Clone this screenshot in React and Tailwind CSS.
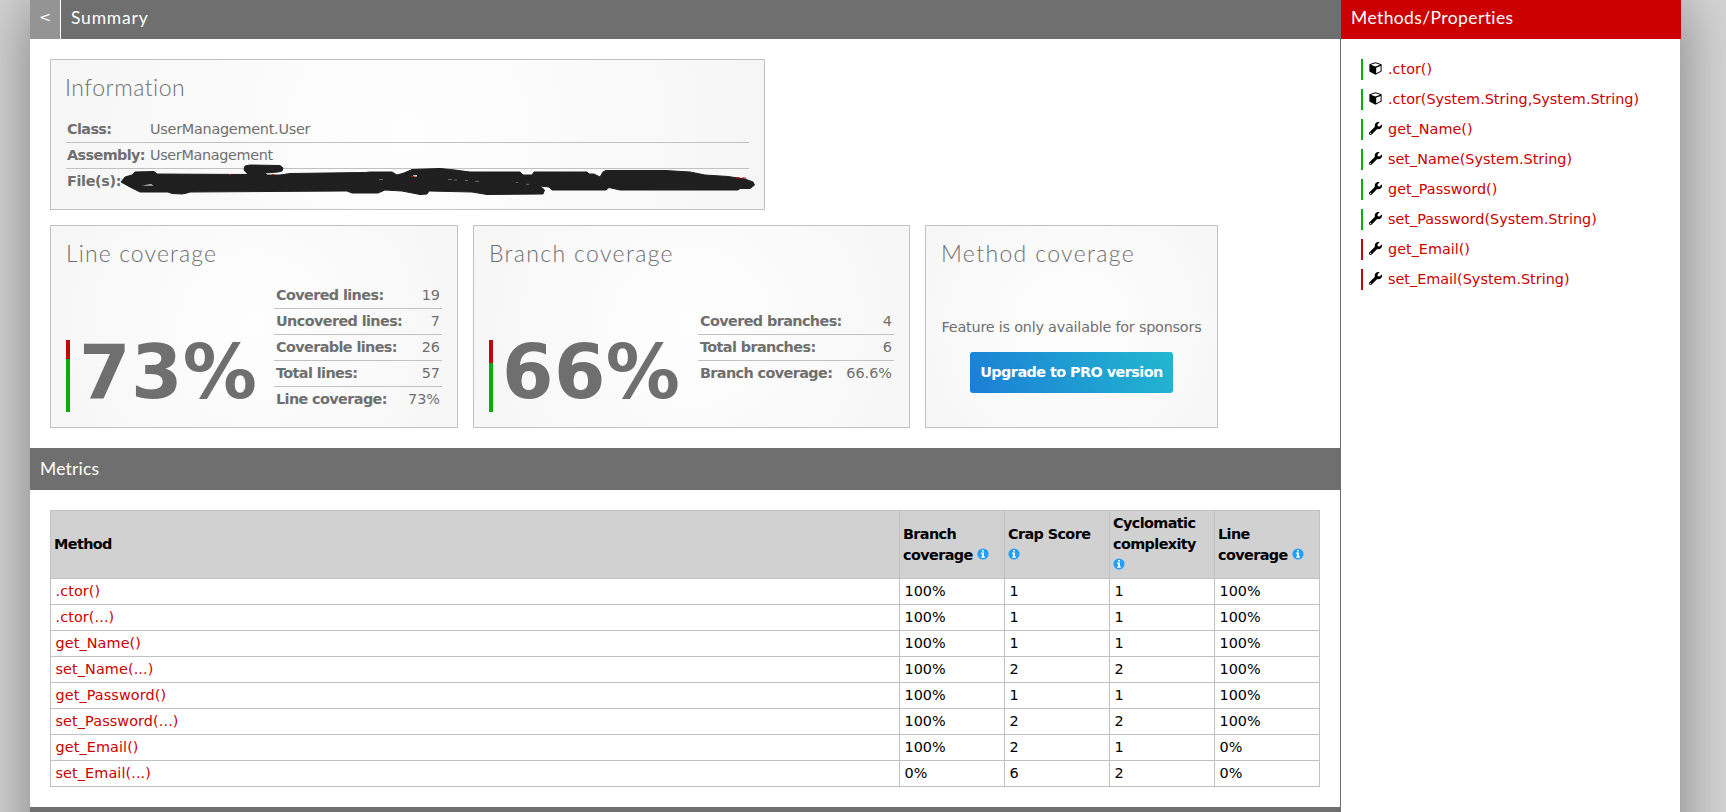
import React from 'react';
import { FaWrench } from 'react-icons/fa';

const methods = [
  { name: '.ctor()', short: '.ctor()', type: 'ctor', covered: true, values: ['100%', '1', '1', '100%'] },
  { name: '.ctor(System.String,System.String)', short: '.ctor(...)', type: 'ctor', covered: true, values: ['100%', '1', '1', '100%'] },
  { name: 'get_Name()', short: 'get_Name()', type: 'prop', covered: true, values: ['100%', '1', '1', '100%'] },
  { name: 'set_Name(System.String)', short: 'set_Name(...)', type: 'prop', covered: true, values: ['100%', '2', '2', '100%'] },
  { name: 'get_Password()', short: 'get_Password()', type: 'prop', covered: true, values: ['100%', '1', '1', '100%'] },
  { name: 'set_Password(System.String)', short: 'set_Password(...)', type: 'prop', covered: true, values: ['100%', '2', '2', '100%'] },
  { name: 'get_Email()', short: 'get_Email()', type: 'prop', covered: false, values: ['100%', '2', '1', '0%'] },
  { name: 'set_Email(System.String)', short: 'set_Email(...)', type: 'prop', covered: false, values: ['0%', '6', '2', '0%'] }
];

const lineStats = [
  ['Covered lines:', '19'],
  ['Uncovered lines:', '7'],
  ['Coverable lines:', '26'],
  ['Total lines:', '57'],
  ['Line coverage:', '73%']
];

const branchStats = [
  ['Covered branches:', '4'],
  ['Total branches:', '6'],
  ['Branch coverage:', '66.6%']
];

function CubeIcon() {
  return (
    <svg viewBox="0 0 13 13" className="h-[13px] w-[13px]">
      <path d="M6.5 0.3L12.6 2.2V9.6L6.5 12.7L0.4 9.6V2.2Z" fill="#000" />
      <path d="M6.5 1.3L11.2 2.8L6.5 4.6L1.8 2.8Z" fill="#fff" />
      <path d="M7.2 5.8L11.6 4.1V9L7.2 11.2Z" fill="#fff" />
    </svg>
  );
}

function InfoIcon() {
  return (
    <svg viewBox="0 0 12 12" className="relative -top-[2px] inline h-3 w-3 align-middle">
      <circle cx="6" cy="6" r="5.6" fill="#23a0fc" />
      <path d="M5 2h2v1.6H5zM4.2 4.6H7v3.8h.9v1.3H4.1V8.4H5V5.9h-.8z" fill="#fff" />
    </svg>
  );
}

// Blacked out file path
function Redaction() {
  return (
    <svg viewBox="120 160 640 40" className="absolute -top-[9px] left-[54px] h-10 w-[640px]">
      <path
        d="M121 182L125 177L132 175L135 172L154 171.500L157 174L248 174.500L244 170L245 166L250 165L280 165.500L283 168L282 171L278 172L265 173L267 175L280 175L290 173.500L365 172.500L370 172L392 172L397 175L404 173L412 169.500L440 168.500L455 170L470 172L520 172L523 175L532 175L534 172L587 172L589 174L594 174L598 176L600 177L603 172L606 170.500L665 170.500L690 172L705 175L728 176.500L745 179L753 182L754.500 185L750 188.500L740 188.500L738 190L620 190L609 187.500L606 190L552 190L549 187L540 186L544.500 190L543 194L487 194.500L472 192L429 191L427 194L420 194.500L402 191L385 190L378 193L352 193L347 191L190 192L187 193L182 194L172 193.500L168 192L140 192L130 187Z"
        fill="#1f1f1f"
        stroke="#1f1f1f"
        strokeLinejoin="round"
      />
      <path d="M141.500 185.500L151 184.200L153.500 185.500Z" fill="#fff" />
      <path d="M413 175.500L417 175V176.500H413Z" fill="#fff" />
      <path d="M736 178h4M742 178h4M411 176.500h3M229 174.500h2M272 174.500h2" stroke="#c00" />
      <path d="M379 179.500h4M448 179.500h4M454 180h3M465 180.500h3M475 181.300h4M516 182.500h2M526 184.300h3" stroke="#8a7a78" strokeWidth="0.8" />
    </svg>
  );
}

function Card({ title, titleClass, className, children }) {
  return (
    <div className={`flex flex-col border border-[#c1c1c1] bg-[radial-gradient(circle,#fefefe_0%,#f6f6f6_100%)] p-[15px] text-[#6f6f6f] ${className}`}>
      <h2 className={`h-[27px] whitespace-nowrap font-['Lato'] text-[23px] font-light leading-[25px] ${titleClass}`}>{title}</h2>
      {children}
    </div>
  );
}

function Percentage({ value, uncovered }) {
  return (
    <div className="flex h-[72px]">
      <div className="flex h-full w-1 flex-col bg-[#0aad0a]">
        <div className="bg-[#c10909]" style={{ height: uncovered }} />
      </div>
      <span className="ml-[9px] text-[74px] font-bold leading-[64px] tracking-[0.4px]">{value}</span>
    </div>
  );
}

function Stats({ rows, className }) {
  return (
    <div className={`shrink-0 divide-y divide-[#c1c1c1] ${className}`}>
      {rows.map(([label, value]) => (
        <div key={label} className="flex h-[26px] items-center justify-between px-[2px] last:h-[25px]">
          <span className="font-bold tracking-[-0.6px]">{label}</span>
          <span>{value}</span>
        </div>
      ))}
    </div>
  );
}

function HeaderCell({ children }) {
  return (
    <th className="w-[105px] border border-[#c1c1c1] pl-[3px] pr-[8px] text-left leading-[21px]">
      {children} <InfoIcon />
    </th>
  );
}

export default function App() {
  return (
    <div className="h-[812px] overflow-hidden bg-[#d6d6d6] font-['DejaVu_Sans',sans-serif] text-[14.4px]">
      <div className="ml-[30px] flex h-[1200px] w-[1650px] bg-white shadow-[0_0_60px_#7d7d7d]">
        {/* Left column */}
        <main className="w-[1311px] border-r border-[#6f6f6f]">
          <div className="-mr-px flex h-[39px] items-center bg-[#6f6f6f] text-white">
            <a className="flex h-full w-[31px] items-center justify-center border-r border-white bg-[#949494] pb-1">&lt;</a>
            <h1 className="pb-[3px] pl-[10px] font-['Lato'] text-[17.5px] tracking-[0.8px]">Summary</h1>
          </div>

          <div className="flex flex-col gap-[15px] p-5">
            <Card title="Information" titleClass="-ml-px tracking-[0.5px]" className="h-[151px] w-[715px]">
              <div className="mt-[15px] divide-y divide-[#c1c1c1]">
                <div className="flex h-[26px] items-center px-px">
                  <span className="w-[83px] font-bold tracking-[-0.6px]">Class:</span>
                  <span className="tracking-[-0.25px]">UserManagement.User</span>
                </div>
                <div className="flex h-[26px] items-center px-px">
                  <span className="w-[83px] font-bold tracking-[-0.6px]">Assembly:</span>
                  <span className="tracking-[-0.35px]">UserManagement</span>
                </div>
                <div className="relative flex h-[25px] items-center px-px">
                  <span className="w-[83px] font-bold tracking-[-0.35px]">File(s):</span>
                  <Redaction />
                </div>
              </div>
            </Card>

            <div className="flex gap-[15px]">
              <Card title="Line coverage" titleClass="tracking-[1.1px]" className="h-[203px] w-[408px]">
                <div className="flex flex-1 items-end justify-between">
                  <Percentage value="73%" uncovered={19} />
                  <Stats rows={lineStats} className="w-[168px]" />
                </div>
              </Card>

              <Card title="Branch coverage" titleClass="tracking-[1.35px]" className="h-[203px] w-[437px]">
                <div className="flex flex-1 items-end justify-between">
                  <Percentage value="66%" uncovered={23} />
                  <Stats rows={branchStats} className="mb-[26px] w-[196px]" />
                </div>
              </Card>

              <Card title="Method coverage" titleClass="tracking-[1.35px]" className="h-[203px] w-[293px]">
                <div className="flex flex-1 flex-col items-center pt-[49px]">
                  <p className="whitespace-nowrap leading-[20px] tracking-[-0.22px]">Feature is only available for sponsors</p>
                  <a className="mt-[15px] flex h-[41px] w-[203px] items-center justify-center whitespace-nowrap rounded-[3px] bg-[linear-gradient(60deg,#1c7ed6,#22b8cf)] font-bold tracking-[-0.55px] text-white">
                    Upgrade to PRO version
                  </a>
                </div>
              </Card>
            </div>
          </div>

          <h1 className="h-[42px] bg-[#6f6f6f] pl-[10px] font-['Lato'] text-[17.5px] leading-[42px] tracking-[0.2px] text-white">Metrics</h1>

          <div className="p-5">
            <table className="w-[1270px] table-fixed border-collapse">
              <thead>
                <tr className="h-[68px] bg-[#d1d1d1] tracking-[-0.6px]">
                  <th className="border border-[#c1c1c1] px-[3px] text-left">Method</th>
                  <HeaderCell>Branch coverage</HeaderCell>
                  <HeaderCell>Crap Score</HeaderCell>
                  <HeaderCell>Cyclomatic complexity</HeaderCell>
                  <HeaderCell>Line coverage</HeaderCell>
                </tr>
              </thead>
              <tbody>
                {methods.map((m) => (
                  <tr key={m.name} className="h-[26px]">
                    <td className="border border-[#c1c1c1] px-[4.5px] tracking-[0.1px] text-[#c00]">{m.short}</td>
                    {m.values.map((v, idx) => (
                      <td key={idx} className="border border-[#c1c1c1] px-[4.5px]">{v}</td>
                    ))}
                  </tr>
                ))}
              </tbody>
            </table>
          </div>

          <div className="h-[42px] bg-[#6f6f6f]" />
        </main>

        {/* Right column */}
        <aside className="w-[339px]">
          <h1 className="relative -mr-px h-[39px] bg-[#c00] pl-[10px] font-['Lato'] text-[17.5px] leading-[36px] tracking-[0.4px] text-white">Methods/Properties</h1>
          <ul className="flex flex-col gap-[9px] pl-5 pt-5">
            {methods.map((m) => (
              <li key={m.name} className={`flex h-[21px] items-center border-l-2 pl-[6px] text-[#c00] ${m.covered ? 'border-[#0aad0a]' : 'border-[#c10909]'}`}>
                <span className="pb-[3px]">
                  {m.type === 'ctor' ? <CubeIcon /> : <FaWrench className="h-[13px] w-[13px] text-black" />}
                </span>
                <span className="ml-[6px]">{m.name}</span>
              </li>
            ))}
          </ul>
        </aside>
      </div>
    </div>
  );
}
